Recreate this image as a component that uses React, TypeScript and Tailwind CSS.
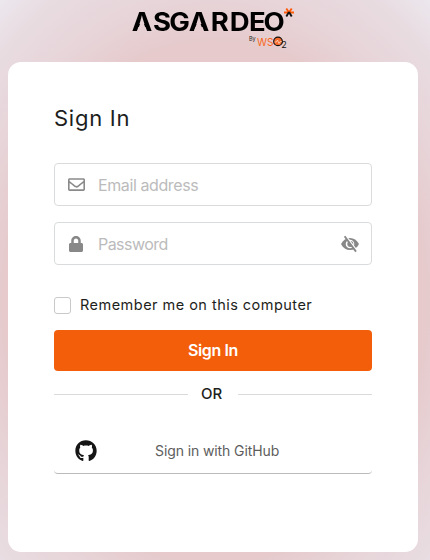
import React from "react";
import { FaRegEnvelope, FaLock, FaGithub } from "react-icons/fa";

function Logo() {
  return (
    <svg width="166" height="46" viewBox="130 5 166 46" className="block" role="img" aria-label="Asgardeo by WSO2">
      <defs>
        <mask id="openA" maskUnits="userSpaceOnUse" x="130" y="5" width="166" height="46">
          <rect x="130" y="5" width="166" height="46" fill="white" />
          <path d="M142 18.5 L148 35 H136Z M198.6 18.5 L204.6 35 H192.6Z" fill="black" />
        </mask>
      </defs>
      <g mask="url(#openA)">
        <text transform="scale(1.1 1)" x="119.7 139.2 153.8 171.6 191.6 208.9 226.3 239.6" y="31.3" fontSize="25" fontWeight="700" className="font-['Inter',sans-serif]">ASGARDEO</text>
      </g>
      <g fill="none" strokeWidth="1.9">
        <path d="M284 12.5H294M289 12.5L286.3 8.5M289 12.5L291.7 8.5" stroke="#ff5a0a" />
        <path d="M289 12L286.3 16.6M289 12L291.7 16.6" stroke="#111" />
      </g>
      <text x="249" y="41" fontSize="5.5" fill="#222" className="font-['Inter',sans-serif]">By</text>
      <text x="257" y="45.5" fontSize="11" fill="#f76922" textLength="16.5" lengthAdjust="spacingAndGlyphs" className="font-['Inter',sans-serif]">WS</text>
      <circle cx="278" cy="41.4" r="4.3" fill="#f66b2b" stroke="#111" strokeWidth="1.2" />
      <path d="M274.5 42h2l1-2 1.5 3.5 1-1.8h2" fill="none" stroke="#ffd5c1" strokeWidth=".8" />
      <text x="281.2" y="47.8" fontSize="9" fill="#111" className="font-['Inter',sans-serif]">2</text>
    </svg>
  );
}

function EyeSlash() {
  return (
    <svg width="20" height="18" viewBox="0 0 20 18" fill="#888">
      <path fillRule="evenodd" d="M1 9C3 5 6.2 3 10 3s7 2 9 6c-2 4-5.2 6-9 6s-7-2-9-6Zm9-4.3a4.3 4.3 0 1 0 0 8.6 4.3 4.3 0 0 0 0-8.6Z" />
      <circle cx="10.3" cy="9" r="3" />
      <path d="M6 1.2L17 15.7" stroke="white" strokeWidth="1.6" />
      <path d="M4.6 1.2L16 16.6" stroke="#888" strokeWidth="1.9" />
    </svg>
  );
}

export default function App() {
  return (
    <main className="h-[560px] w-[430px] overflow-hidden bg-[radial-gradient(ellipse_300px_370px_at_50%_54%,#e6c8ca_0%,#e6cacc_70%,#e7d4d8_82%,#e8dce1_98%,#ece8ee_109%)] px-2 pt-[5px] font-['Inter',sans-serif] text-[#1d1e20]">
      <header className="flex h-[57px] pl-[122px]"><Logo /></header>
      <section className="h-[490px] w-[410px] rounded-[13px] bg-white px-[46px] pt-[39px]">
        <h1 className="h-[62px] text-[22px] leading-[34px] tracking-[0.75px]">Sign In</h1>
        <form onSubmit={(e) => e.preventDefault()}>
          <label className="flex h-[43px] items-center rounded-[4px] border border-[#dadbdc] pl-[13px]">
            <FaRegEnvelope size={17} color="#8a8a8a" />
            <input aria-label="Email address" placeholder="Email address" className="ml-[13px] w-[220px] text-base tracking-[-0.4px] outline-none placeholder:text-[#bbbbbc]" />
          </label>
          <label className="mt-4 flex h-[43px] items-center rounded-[4px] border border-[#dadbdc] pl-[13px]">
            <FaLock size={16} color="#888" />
            <input aria-label="Password" type="password" placeholder="Password" className="ml-[14px] w-[220px] text-base tracking-[-0.55px] outline-none placeholder:text-[#bbbbbc]" />
            <span className="ml-auto mr-[11px]"><EyeSlash /></span>
          </label>
          <label className="mt-[31px] flex h-[19px] items-center">
            <input type="checkbox" className="h-[17px] w-[17px] appearance-none rounded-[3px] border border-[#c9c9ca]" />
            <span className="ml-[9px] whitespace-nowrap pb-[2px] text-[14.5px] tracking-[0.47px]">Remember me on this computer</span>
          </label>
          <button className="mt-[15px] h-[41px] w-full rounded-[4px] bg-[#f35e0a] pb-[2px] text-base font-semibold tracking-[-0.4px] text-white">Sign In</button>
        </form>
        <div className="mt-[11px] flex h-6 items-center gap-[13px] text-[15px] font-medium">
          <span className="h-px flex-1 bg-[#d9dadb]" /><span className="w-6 text-left">OR</span><span className="h-px flex-1 bg-[#d9dadb]" />
        </div>
        <button className="mt-[23px] flex h-[45px] w-full items-center rounded-[4px] border-b border-[#bbbbbc] pl-[21px] text-sm text-[#5d5d5d]">
          <FaGithub size={22} color="#151515" />
          <span className="ml-[58px] tracking-[-0.1px]">Sign in with GitHub</span>
        </button>
      </section>
    </main>
  );
}
